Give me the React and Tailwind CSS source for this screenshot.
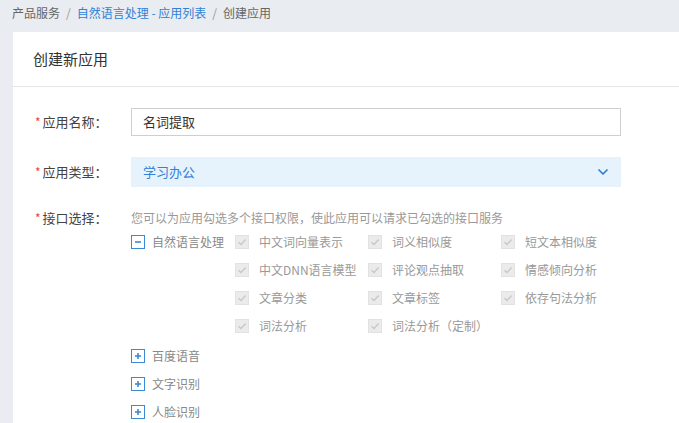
import { ChevronDown } from "lucide-react";

const font = { fontFamily: '"Noto Sans CJK SC", "Noto Sans", sans-serif' };

const nlpItems = [
  ["中文词向量表示", "词义相似度", "短文本相似度"],
  ["中文DNN语言模型", "评论观点抽取", "情感倾向分析"],
  ["文章分类", "文章标签", "依存句法分析"],
  ["词法分析", "词法分析（定制）"],
];

function DisabledCheck() {
  return (
    <span className="w-[14px] h-[14px] bg-[#ebebeb] border border-[#e2e2e2] flex items-center justify-center shrink-0">
      <svg width="10" height="10" viewBox="0 0 10 10">
        <path d="M1.5 5.2 L4 7.5 L8.6 2.5" fill="none" stroke="#c8c8c8" strokeWidth="1.4" />
      </svg>
    </span>
  );
}

function ToggleBox({ open }) {
  return (
    <span className="w-[14px] h-[14px] border border-[#3c8ad4] bg-white flex items-center justify-center shrink-0">
      <svg width="10" height="10" viewBox="0 0 10 10">
        <path d="M2 5 H8" stroke="#3c8ad4" strokeWidth="1.6" />
        {!open && <path d="M5 2 V8" stroke="#3c8ad4" strokeWidth="1.6" />}
      </svg>
    </span>
  );
}

function Label({ children, top }) {
  return (
    <div
      className={
        top
          ? "w-[118px] h-[18px] shrink-0 pl-[22px] text-[13px] text-[#444] flex items-center"
          : "w-[118px] shrink-0 pl-[22px] text-[13px] text-[#444] flex items-center"
      }
    >
      <span className="text-[#e64545] text-[12px] mr-[2px]">*</span>
      {children}
    </div>
  );
}

function App() {
  return (
    <div className="w-[679px] h-[423px] bg-[#e9ecf0] overflow-hidden" style={font}>
      <div className="h-[25px] pl-[12px] flex items-center text-[12px] text-[#666]">
        <span>产品服务</span>
        <span className="mx-[6px] text-[#999]">/</span>
        <span className="text-[#2f82d6]">自然语言处理 - 应用列表</span>
        <span className="mx-[6px] text-[#999]">/</span>
        <span>创建应用</span>
      </div>
      <div className="ml-[13px] mt-[7px] bg-white h-[400px]">
        <div className="h-[55px] border-b border-[#e6e6e6] pl-[20px] flex items-center text-[15px] text-[#333]">
          创建新应用
        </div>
        <div className="pt-[21px]">
          <div className="flex h-[28px]">
            <Label>应用名称：</Label>
            <div className="w-[490px] border border-[#cfcfcf] flex items-center pl-[11px] text-[13px] text-[#333]">
              名词提取
            </div>
          </div>
          <div className="flex h-[30px] mt-[21px]">
            <Label>应用类型：</Label>
            <div className="w-[490px] bg-[#e6f3fc] flex items-center justify-between pl-[12px] pr-[10px] text-[13px] text-[#2f82d6]">
              <span>学习办公</span>
              <ChevronDown size={16} strokeWidth={2.6} color="#2f7fcc" />
            </div>
          </div>
          <div className="flex items-start mt-[22px]">
            <Label top>接口选择：</Label>
            <div className="flex-1">
              <div className="h-[18px] flex items-center text-[12px] text-[#999]">
                您可以为应用勾选多个接口权限，使此应用可以请求已勾选的接口服务
              </div>
              <div className="flex mt-[1px]">
                <div className="w-[104px] h-[28px] flex items-center gap-[7px] text-[12px] text-[#888]">
                  <ToggleBox open />
                  <span>自然语言处理</span>
                </div>
                <div>
                  {nlpItems.map((row, i) => (
                    <div key={i} className="flex h-[28px]">
                      {row.map((item) => (
                        <div key={item} className="w-[133px] flex items-center gap-[10px] text-[12px] text-[#999]">
                          <DisabledCheck />
                          <span>{item}</span>
                        </div>
                      ))}
                    </div>
                  ))}
                </div>
              </div>
              <div className="mt-[2px]">
                {["百度语音", "文字识别", "人脸识别"].map((g) => (
                  <div key={g} className="h-[28px] flex items-center gap-[7px] text-[12px] text-[#888]">
                    <ToggleBox />
                    <span>{g}</span>
                  </div>
                ))}
              </div>
            </div>
          </div>
        </div>
      </div>
    </div>
  );
}

export default App;
